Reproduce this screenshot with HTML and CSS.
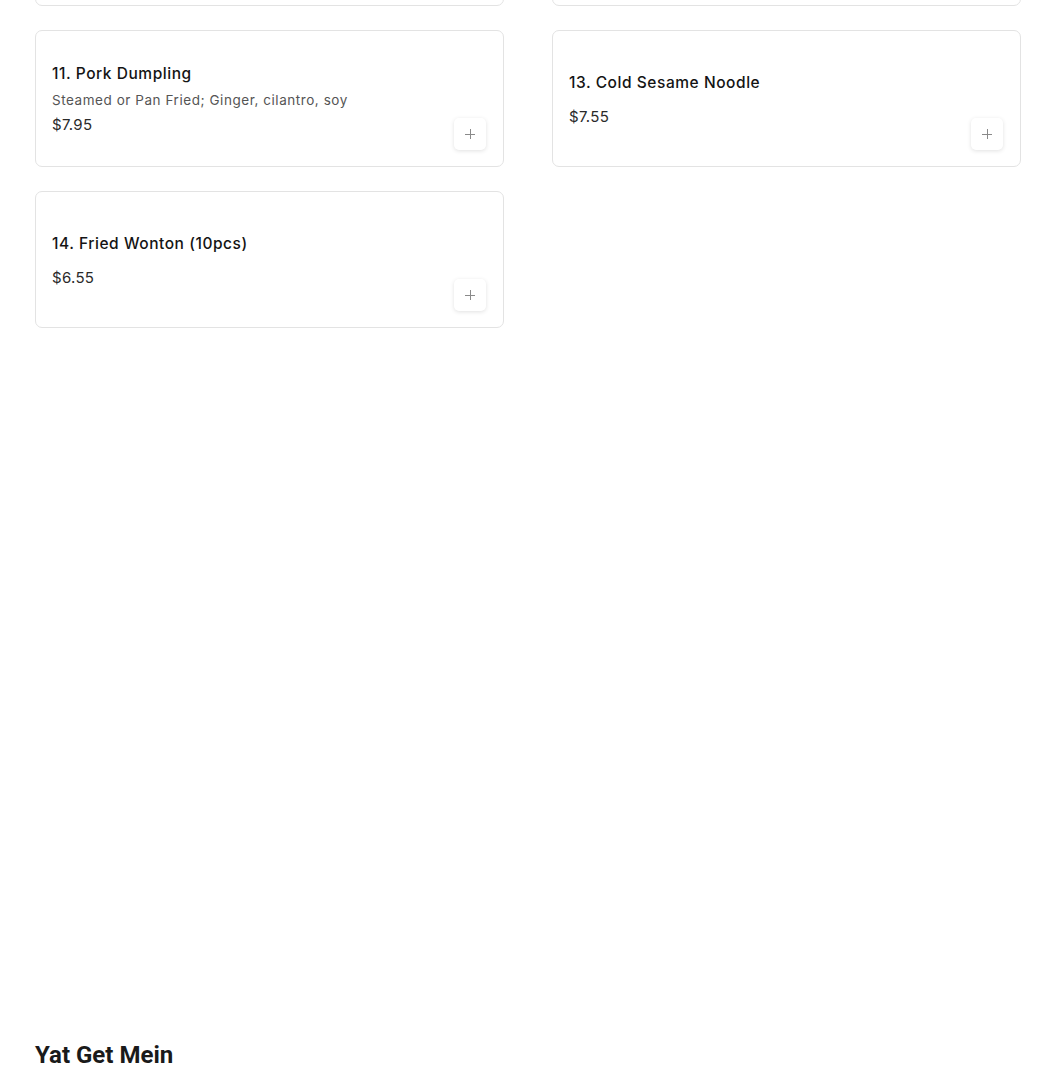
FILE: index.html
```html
<!DOCTYPE html>
<html>

<head>

	<title>Menu - Appetizers</title>

	<link rel="stylesheet" href="styles.css">
</head>

<body>

	<div class="menu">

		<section class="category">
			<div class="itemGrid scrolled">
				<!-- row above the fold, only its bottom edge shows -->
				<div class="item"></div>
				<div class="item"></div>
				<div class="item">
					<div class="itemInfo">
						<h3 class="itemName">11. Pork Dumpling</h3>
						<p class="itemDesc">Steamed or Pan Fried; Ginger, cilantro, soy</p>
						<p class="itemPrice">$7.95</p>
					</div>
					<button class="btnAdd" title="Add to order"></button>
				</div>
				<div class="item">
					<div class="itemInfo">
						<h3 class="itemName">13. Cold Sesame Noodle</h3>
						<p class="itemPrice">$7.55</p>
					</div>
					<button class="btnAdd" title="Add to order"></button>
				</div>
				<div class="item">
					<div class="itemInfo">
						<h3 class="itemName">14. Fried Wonton (10pcs)</h3>
						<p class="itemPrice">$6.55</p>
					</div>
					<button class="btnAdd" title="Add to order"></button>
				</div>
			</div>
		</section>

		<section class="category">
			<h2 class="categoryTitle">Yat Get Mein</h2>
		</section>

	</div>

</body>

</html>
```

FILE: styles.css
```css
* {
	box-sizing: border-box;
}

html, body {
	margin: 0;
	background: #fff;
	font-family: 'Inter', 'Open Sans', sans-serif;
	color: #1a1a1a;
}

.menu {
	padding: 0 30px 0 35px;
}

/* page is scrolled down: first row only shows its bottom edge */
.scrolled {
	margin-top: -131px;
}

.category {
	margin-bottom: 712px;
}

.itemGrid {
	display: grid;
	grid-template-columns: 469px 469px;
	column-gap: 48px;
	row-gap: 24px;
}

.item {
	position: relative;
	display: flex;
	align-items: center;
	height: 137px;
	padding: 18px 16px 16px;
	border: 1px solid #e3e3e3;
	border-radius: 7px;
}

.itemInfo {
	display: flex;
	flex-direction: column;
}

.itemName {
	margin: 0 0 14px;
	font-size: 15.5px;
	font-weight: 500;
	letter-spacing: 0.55px;
	line-height: 20px;
	color: #141414;
}

.itemDesc {
	margin: -8px 0 5px;
	font-size: 13.5px;
	letter-spacing: 0.55px;
	line-height: 20px;
	color: #555;
}

.itemPrice {
	margin: 0;
	font-size: 15px;
	letter-spacing: 0.3px;
	line-height: 20px;
	color: #2a2a2a;
}

.btnAdd {
	position: absolute;
	right: 17px;
	bottom: 16px;
	width: 32px;
	height: 32px;
	padding: 0;
	border: none;
	border-radius: 5px;
	background: #fff;
	box-shadow: 0 1px 4px rgba(0, 0, 0, 0.12);
}
.btnAdd::before,
.btnAdd::after {
	content: "";
	position: absolute;
	left: 50%;
	top: 50%;
	background: #8a8a8a;
}
.btnAdd::before {
	width: 10px;
	height: 1px;
	margin: 0 0 0 -5px;
}
.btnAdd::after {
	width: 1px;
	height: 10px;
	margin: -5px 0 0 0;
}

.categoryTitle {
	margin: 0;
	font-family: 'Roboto', 'Liberation Sans', sans-serif;
	font-size: 24px;
	font-weight: 700;
	line-height: 30px;
	color: #1a1a1a;
}
```
